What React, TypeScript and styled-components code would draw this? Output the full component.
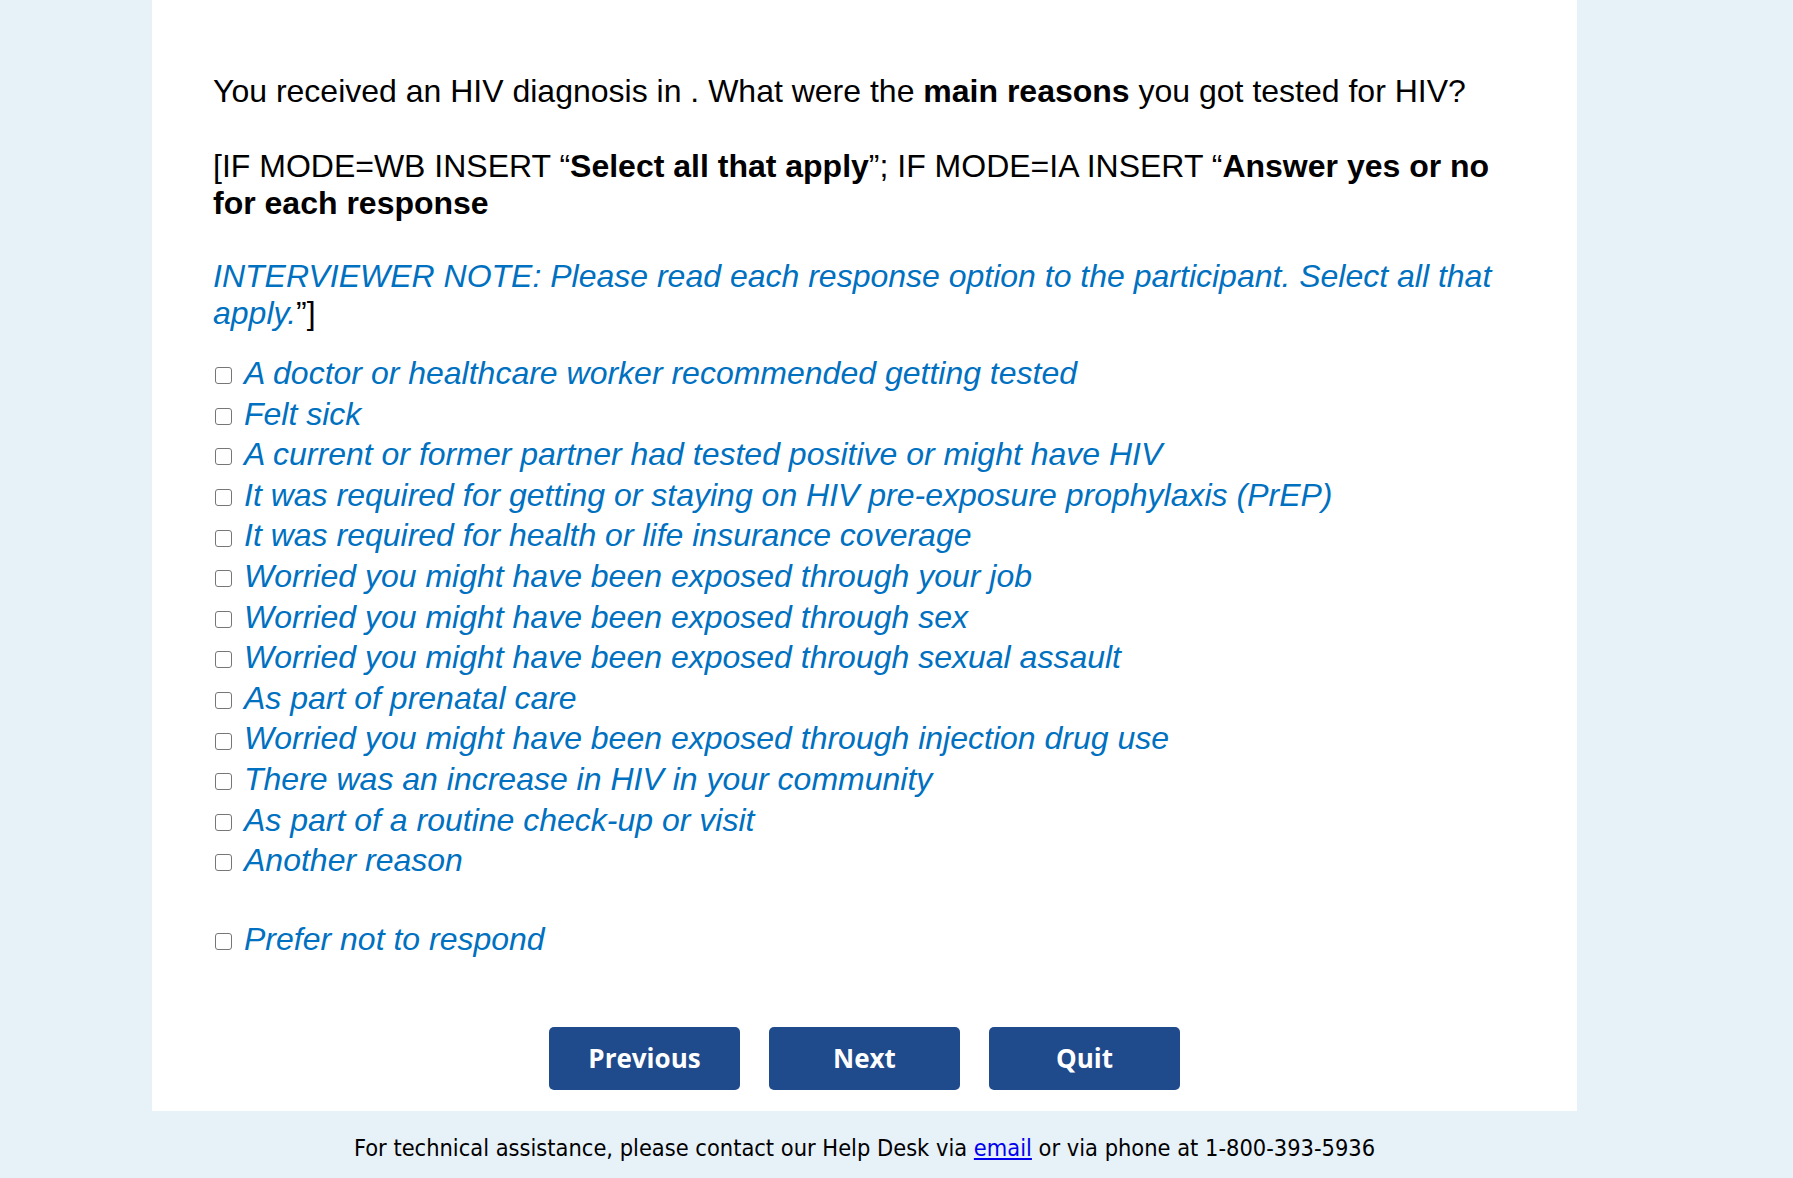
import styled, { createGlobalStyle } from "styled-components";

const GlobalStyle = createGlobalStyle`
  body {
    margin: 0;
    background: #e6f1f8;
  }
`

const Page = styled.div`
  width: 1425px;
  margin-left: 152px;
`

const Panel = styled.main`
  background: #ffffff;
  padding: 73px 61px 21px;
  font-family: "Liberation Sans", Arial, sans-serif;
  font-size: 32px;
  line-height: 37.5px;
  color: #000;
`

const Question = styled.p<{ $gap?: number }>`
  margin: ${(p) => p.$gap ?? 0}px 0 0;
`

const Note = styled.p`
  margin: 35px 0 0;
  color: #0070c0;
  font-style: italic;
`

const Closing = styled.span`
  color: #000;
  font-style: normal;
`

const Options = styled.div`
  display: flex;
  flex-direction: column;
  margin-top: 21px;
`

const Option = styled.label<{ $spaced?: boolean }>`
  display: flex;
  align-items: center;
  height: 40.6px;
  margin-top: ${(p) => (p.$spaced ? "38px" : "0")};
  color: #0070c0;
  font-style: italic;
  cursor: pointer;
`

const Box = styled.input`
  appearance: none;
  width: 17px;
  height: 17px;
  margin: 4px 12px 0 2px;
  border: 1.5px solid #767676;
  border-radius: 3px;
  background: #fff;
  flex: none;
`

const Buttons = styled.div`
  display: flex;
  justify-content: center;
  gap: 29px;
  margin-top: 67px;
`

const Button = styled.button`
  width: 191px;
  height: 63px;
  border: none;
  border-radius: 5px;
  background: #1f4a8c;
  color: #fff;
  font-family: "Open Sans", sans-serif;
  font-weight: 700;
  font-size: 26px;
  cursor: pointer;
`

const Footer = styled.footer`
  padding: 22px 0 12px;
  text-align: center;
  font-family: "DejaVu Sans Condensed", "DejaVu Sans", Tahoma, sans-serif;
  font-size: 23.4px;
  line-height: 30px;
  color: #000;

  a {
    color: #0000ee;
  }
`

const reasons = [
  "A doctor or healthcare worker recommended getting tested",
  "Felt sick",
  "A current or former partner had tested positive or might have HIV",
  "It was required for getting or staying on HIV pre-exposure prophylaxis (PrEP)",
  "It was required for health or life insurance coverage",
  "Worried you might have been exposed through your job",
  "Worried you might have been exposed through sex",
  "Worried you might have been exposed through sexual assault",
  "As part of prenatal care",
  "Worried you might have been exposed through injection drug use",
  "There was an increase in HIV in your community",
  "As part of a routine check-up or visit",
  "Another reason",
]

export default function App() {
  return (
    <Page>
      <GlobalStyle />
      <Panel>
        <Question>
          You received an HIV diagnosis in . What were the <b>main reasons</b> you got tested for HIV?
        </Question>
        <Question $gap={37}>
          [IF MODE=WB INSERT “<b>Select all that apply</b>”; IF MODE=IA INSERT “<b>Answer yes or no for each response</b>
        </Question>
        <Note>
          INTERVIEWER NOTE: Please read each response option to the participant. Select all that apply.<Closing>”]</Closing>
        </Note>

        <Options>
          {reasons.map((r) => (
            <Option key={r}>
              <Box type="checkbox" />
              {r}
            </Option>
          ))}
          <Option $spaced>
            <Box type="checkbox" />
            Prefer not to respond
          </Option>
        </Options>

        <Buttons>
          <Button>Previous</Button>
          <Button>Next</Button>
          <Button>Quit</Button>
        </Buttons>
      </Panel>
      <Footer>
        For technical assistance, please contact our Help Desk via <a href="#">email</a> or via phone at 1-800-393-5936
      </Footer>
    </Page>
  );
}
